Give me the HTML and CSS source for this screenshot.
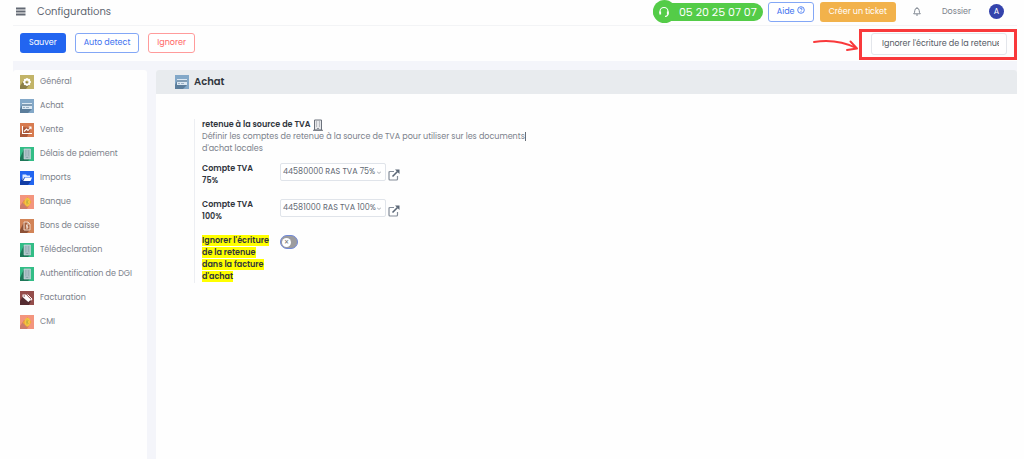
FILE: index.html
```html
<!DOCTYPE html>
<html lang="fr">
<head>
    <meta charset="UTF-8">
    <meta name="viewport" content="width=device-width, initial-scale=1.0">
    <title>Configurations</title>
    <link rel="stylesheet" href="styles.css">
</head>
<body>
    <!-- shared icons -->
    <svg class="sprite" aria-hidden="true">
        <symbol id="card" viewBox="0 0 14 14">
            <path d="M0 10L3 4h9v6l-4 4H0z" fill="#5b7d9b"/>
            <rect x="2" y="4" width="10" height="6" fill="#dce8f2"/>
            <path d="M2 5.200h10v1.600H2z" fill="#6b8aa6"/>
            <path d="M3 8.500h2M6 8.500h3" stroke="#7e99b1" stroke-width=".7"/>
        </symbol>
        <symbol id="building" viewBox="0 0 14 14">
            <path d="M0 11L4 2h6v10l-2 2H0z" fill="#1e7759"/>
            <path d="M4 2h6.500v10H4z" fill="#a9bec4" stroke="#d3dfe2" stroke-width=".6"/>
            <path d="M5.300 4h1M8 4h1M5.300 6h1M8 6h1M5.300 8h1M8 8h1M6.200 10.500h2" stroke="#7f9a9f" stroke-width=".8"/>
        </symbol>
        <symbol id="coin" viewBox="0 0 14 14">
            <path d="M0 11l4-6 6 4-3 5H0z" fill="#cd7c6b"/>
            <path d="M2.500 7.500l5-5.500 4 5-4 5.500z" fill="#f0a13a"/>
            <ellipse cx="7.500" cy="7" rx="2.800" ry="4" fill="#f5c542"/>
            <path d="M7 4.500v5M8.500 5.500L6.500 7l2 1.500" stroke="#b5a93c" stroke-width=".8" fill="none"/>
        </symbol>
        <symbol id="external" viewBox="0 0 12 12">
            <path d="M6 2.500H2Q1 2.500 1 3.500V10q0 1 1 1h6.500q1 0 1-1V7" fill="none" stroke="#838c98" stroke-width="1.200"/>
            <path d="M4.500 7.500L9.500 2.500" stroke="#5b6776" stroke-width="1.600"/>
            <path d="M7 .5h4.500V5z" fill="#5b6776"/>
        </symbol>
    </svg>

    <div class="page">
        <header class="topbar">
            <button class="menu-btn" aria-label="Menu">
                <svg width="10" height="9" viewBox="0 0 10 9"><path d="M0 1.500h9.500M0 4.500h9.500M0 7.500h9.500" stroke="#626873" stroke-width="1.900"/></svg>
            </button>
            <h1 class="page-title">Configurations</h1>
            <div class="top-actions">
                <a class="phone" href="tel:0520250707">
                    <span class="phone-icon">
                        <svg width="12" height="12" viewBox="0 0 12 12" fill="none" stroke="#fff">
                            <path d="M2 7V5.500a4 4 0 0 1 8 0V8q0 2-3 2.500" stroke-width="1.100"/>
                            <path d="M2.200 5.500v3M9.800 5.500v3" stroke-width="1.800"/>
                        </svg>
                    </span>
                    05 20 25 07 07
                </a>
                <button class="btn btn-blue">Aide
                    <svg width="8" height="8" viewBox="0 0 8 8" fill="none" stroke="#4b7cf0" stroke-width=".9"><circle cx="4" cy="4" r="3.300"/><path d="M2.900 3.200q.2-1.100 1.200-1.100 1.200.2 1 1.100-.2.600-1.100 1.100M4 5.200v.9"/></svg>
                </button>
                <button class="btn btn-orange">Créer un ticket</button>
                <button class="bell" aria-label="Notifications">
                    <svg width="8" height="9" viewBox="0 0 8 9" fill="none" stroke="#737b86" stroke-width=".9"><path d="M.7 6.800Q1.800 5.700 1.800 3.500 2 1.200 4 1.200t2.200 2.300q0 2.200 1.100 3.300zM3 8h2M4 .2v1"/></svg>
                </button>
                <a class="folder" href="#">Dossier</a>
                <button class="avatar">A</button>
            </div>
        </header>

        <div class="toolbar">
            <button class="btn btn-primary">Sauver</button>
            <button class="btn btn-blue">Auto detect</button>
            <button class="btn btn-red">Ignorer</button>
            <div class="search">
                <svg class="arrow" width="46" height="14" viewBox="0 0 46 14" fill="none" stroke="#f9393b" stroke-width="1.900" stroke-linecap="round" stroke-linejoin="round"><path d="M1 4Q24 .5 43 10M37.500 3.500l6.500 7L34 12"/></svg>
                <input class="search-input" type="text" aria-label="Rechercher" value="Ignorer l'écriture de la retenue dans la facture d'achat">
            </div>
        </div>

        <div class="body">
            <nav class="sidebar">
                <a class="item" href="#"><svg class="icon olive" viewBox="0 0 14 14"><path d="M0 11l4-6 6 4-4 5H0z" fill="#8b8049"/><circle cx="7" cy="7" r="2.500" fill="none" stroke="#fff" stroke-width="1.800"/><path d="M7 3v1.500M7 9.500V11M3 7h1.500M9.500 7H11M4.200 4.200l1 1M8.800 8.800l1 1M9.800 4.200l-1 1M5.200 8.800l-1 1" stroke="#fff" stroke-width="1.300"/></svg>Général</a>
                <a class="item" href="#"><svg class="icon blue"><use href="#card"/></svg>Achat</a>
                <a class="item" href="#"><svg class="icon rust" viewBox="0 0 14 14"><path d="M0 11l3-7 8 1-4 9H0z" fill="#a9583a"/><path d="M2.500 3v7.500H12M4 8.500l2.500-2.500 1.500 1.500L11 4M8.800 4H11v2.200" fill="none" stroke="#fff" stroke-width="1.100"/></svg>Vente</a>
                <a class="item" href="#"><svg class="icon green"><use href="#building"/></svg>Délais de paiement</a>
                <a class="item" href="#"><svg class="icon royal" viewBox="0 0 14 14"><path d="M0 11l3-5 8 4-3 4H0z" fill="#123da5"/><path d="M2.500 9.500v-6H6l1 1h3V6H4.500z" fill="#dce9ff"/><path d="M5 6.500h7L10.500 10H3.200z" fill="#fff"/></svg>Imports</a>
                <a class="item" href="#"><svg class="icon salmon"><use href="#coin"/></svg>Banque</a>
                <a class="item" href="#"><svg class="icon brown" viewBox="0 0 14 14"><path d="M0 11l4-8 6 8-3 3H0z" fill="#8d5136"/><path d="M4 3h4l2 2v6H4z" fill="#a8633f" stroke="#f0d7c7"/><path d="M8 3v2h2M8 6H6.500v1.500h1.300V9H6M7 5.300v4.400" fill="none" stroke="#f5e5db" stroke-width=".8"/></svg>Bons de caisse</a>
                <a class="item" href="#"><svg class="icon green"><use href="#building"/></svg>Télédeclaration</a>
                <a class="item" href="#"><svg class="icon green"><use href="#building"/></svg>Authentification de DGI</a>
                <a class="item" href="#"><svg class="icon wine" viewBox="0 0 14 14"><path d="M0 10l3-5 8 5-2 4H0z" fill="#552c31"/><path d="M2.500 3.500H6l5 5L8.300 11l-5.800-5z" fill="#fff"/><path d="M7.500 3.500l4.500 4.500-1 1.500" fill="none" stroke="#fff"/><circle cx="4.200" cy="5" r=".7" fill="#7b4140"/></svg>Facturation</a>
                <a class="item" href="#"><svg class="icon salmon"><use href="#coin"/></svg>CMI</a>
            </nav>

            <main class="content">
                <h2 class="section-title"><svg class="icon blue"><use href="#card"/></svg>Achat</h2>
                <form class="settings">
                    <h3 class="settings-title">retenue à la source de TVA
                        <svg width="10" height="12" viewBox="0 0 10 12"><path d="M1.500 1h7v10h-7z" fill="#e6e8eb" stroke="#6c727c"/><path d="M0 11.300h10" stroke="#6c727c"/><path d="M3 3h1M6 3h1M3 5h1M6 5h1M3 7h1M6 7h1M4 9.500h2" stroke="#8d929a"/></svg>
                    </h3>
                    <p class="description">Définir les comptes de retenue à la source de TVA pour utiliser sur les documents<span class="caret"></span><br>d'achat locales</p>

                    <div class="field">
                        <label for="tva75">Compte TVA<br>75%</label>
                        <select id="tva75"><option>44580000 RAS TVA 75%</option></select>
                        <a class="open" href="#" aria-label="Ouvrir"><svg width="12" height="12"><use href="#external"/></svg></a>
                    </div>
                    <div class="field">
                        <label for="tva100">Compte TVA<br>100%</label>
                        <select id="tva100"><option>44581000 RAS TVA 100%</option></select>
                        <a class="open" href="#" aria-label="Ouvrir"><svg width="12" height="12"><use href="#external"/></svg></a>
                    </div>
                    <div class="field">
                        <label for="skip"><mark>Ignorer l'écriture<br>de la retenue<br>dans la facture<br>d'achat</mark></label>
                        <input class="switch" type="checkbox" id="skip">
                    </div>
                </form>
            </main>
        </div>
    </div>
</body>
</html>
```

FILE: styles.css
```css
* {
    box-sizing: border-box;
}
body {
    margin: 0;
    background-color: #fefefe;
    color: #7b818b;
    font-family: Poppins, Inter, "Open Sans", sans-serif;
    font-size: 8px;
    line-height: 12px;
}
button, input, select {
    font: inherit;
    color: inherit;
}
button {
    padding: 0;
    border: 0;
    background: none;
}
a {
    color: inherit;
    text-decoration: none;
}
h1, h2, h3, p {
    margin: 0;
}
svg {
    flex-shrink: 0;
}
.sprite {
    position: absolute;
    width: 0;
    height: 0;
}
.page {
    display: flex;
    flex-direction: column;
    min-height: 100vh;
    margin: 0 7px 0 13px;
}

/* top bar */
.topbar {
    display: flex;
    align-items: center;
    height: 26px;
    padding: 0 13px 2px 3px;
    border-bottom: 1px solid #f3f4f6;
}
.menu-btn {
    display: flex;
    margin-right: 11px;
}
.page-title {
    font-size: 10px;
    font-weight: 400;
    color: #5f6671;
}
.top-actions {
    display: flex;
    align-items: center;
    margin-left: auto;
}
.phone {
    display: flex;
    align-items: center;
    height: 18px;
    margin-right: 5px;
    padding-right: 6px;
    border-radius: 9px;
    background-color: #54cc48;
    color: #fff;
    font-size: 11px;
}
.phone-icon {
    display: flex;
    align-items: center;
    justify-content: center;
    width: 23px;
    height: 23px;
    margin-right: 3px;
    border-radius: 50%;
    background-color: #54cc48;
}
.btn {
    height: 20px;
    padding: 0 8px;
    border: 1px solid transparent;
    border-radius: 3px;
    background-color: #fff;
}
.btn-primary {
    background-color: #2265f0;
    color: #fff;
}
.btn-blue {
    border-color: #83a7f6;
    color: #3b70ef;
}
.btn-red {
    border-color: #ff9b9b;
    color: #ff6464;
}
.btn-orange {
    margin-left: 6px;
    background-color: #f2b24b;
    color: #fff;
}
.bell {
    display: flex;
    margin: 0 21px 0 17px;
}
.avatar {
    width: 15px;
    height: 15px;
    margin-left: 18px;
    border-radius: 50%;
    background-color: #3443ac;
    color: #fff;
}

/* actions */
.toolbar {
    display: flex;
    align-items: center;
    gap: 9px;
    height: 35px;
    padding: 0 0 1px 7px;
}
.search {
    position: relative;
    align-self: flex-end;
    margin-left: auto;
    padding: 1px 7px 2px 9px;
    border: 3px solid #f9393b;
}
.search-input {
    display: block;
    width: 136px;
    height: 22px;
    padding: 0 7px 0 10px;
    border: 1px solid #e3e6eb;
    border-radius: 3px;
    background-color: #fff;
    color: #535964;
}
.arrow {
    position: absolute;
    right: 100%;
    top: 6px;
    margin-right: 3px;
}

/* columns */
.body {
    display: flex;
    flex: 1;
    gap: 9px;
    padding-top: 9px;
    background-color: #f4f5fa;
}
.sidebar {
    display: flex;
    flex-direction: column;
    gap: 10px;
    width: 134px;
    padding: 5px 7px;
    border-radius: 3px 3px 0 0;
    background-color: #fefefe;
}
.item {
    display: flex;
    align-items: center;
    gap: 6px;
    height: 14px;
    white-space: nowrap;
}
.icon {
    width: 14px;
    height: 14px;
}
.olive {
    background-color: #c2b468;
}
.blue {
    background-color: #83a8c8;
}
.rust {
    background-color: #d77b50;
}
.green {
    background-color: #32bd86;
}
.royal {
    background-color: #2265f0;
}
.salmon {
    background-color: #f3957e;
}
.brown {
    background-color: #d28457;
}
.wine {
    background-color: #944d4b;
}
.content {
    flex: 1;
    border-radius: 3px 3px 0 0;
    background-color: #fefefe;
}
.section-title {
    display: flex;
    align-items: center;
    gap: 5px;
    height: 24px;
    padding-left: 19px;
    border-radius: 3px 3px 0 0;
    background-color: #e8ebee;
    color: #30353d;
    font-size: 10px;
    font-weight: 600;
}

/* settings */
.settings {
    margin: 25px 38px;
    padding-left: 7px;
    border-left: 1px solid #eceef2;
}
.settings-title {
    display: flex;
    align-items: center;
    gap: 3px;
    height: 12px;
    color: #30353d;
    font-size: 8px;
    font-weight: 600;
}
.description {
    margin-bottom: 8px;
}
.caret {
    display: inline-block;
    height: 9px;
    border-left: 1px solid #686e78;
    vertical-align: middle;
}
.field {
    display: flex;
    align-items: flex-start;
    margin-top: 12px;
}
.description + .field {
    margin-top: 0;
}
.field label {
    width: 78px;
    color: #30353d;
    font-weight: 600;
    white-space: nowrap;
}
.field mark {
    background-color: #ff0;
    color: inherit;
}
.field select {
    width: 106px;
    height: 18px;
    padding: 0 2px;
    border: 1px solid #e0e4ea;
    border-radius: 2px;
    appearance: none;
    background: #fff url("data:image/svg+xml,%3Csvg xmlns='http://www.w3.org/2000/svg' width='4' height='3'%3E%3Cpath d='M0 .5l2 2 2-2' fill='none' stroke='%23a0a5ad'/%3E%3C/svg%3E") no-repeat right 4px center;
    color: #626873;
}
.open {
    display: flex;
    margin: 6px 0 0 2px;
}
.switch {
    display: flex;
    align-items: center;
    width: 18px;
    height: 14px;
    margin: 0;
    padding-left: 1px;
    border: 1px solid #7088d8;
    border-radius: 7px;
    appearance: none;
    background-color: #9c9c9f;
}
.switch::before {
    content: "×";
    width: 9px;
    height: 9px;
    border-radius: 50%;
    background-color: #fff;
    color: #777;
    line-height: 9px;
    text-align: center;
}
```
